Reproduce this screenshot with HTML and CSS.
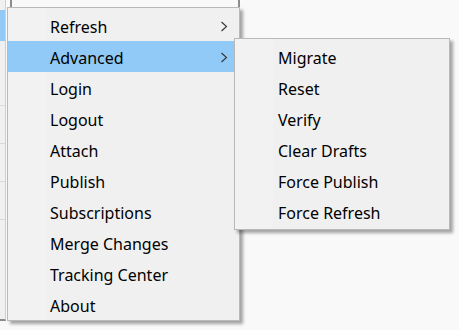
FILE: index.html
```html
<!DOCTYPE html>
<html lang="en">
<head>
    <meta charset="UTF-8">
    <title>Context menu</title>
    <link rel="stylesheet" href="styles.css">
</head>
<body>
    <!-- Window behind the menu -->
    <div class="desk">
        <div class="list">
            <div class="list-row selected"></div>
            <div class="list-row spacer"></div>
            <div class="list-row"></div>
            <div class="list-row"></div>
            <div class="list-row"></div>
        </div>
        <div class="header-line first"></div>
        <div class="header-line second"></div>
    </div>

    <!-- Main menu -->
    <div class="menu main-menu">
        <div class="item">Refresh<span class="arrow"><svg width="8" height="11" viewBox="0 0 8 11"><polyline points="1.5,1 6.5,5.5 1.5,10" fill="none" stroke="#333" stroke-width="1.1"/></svg></span></div>
        <div class="item active">Advanced<span class="arrow"><svg width="8" height="11" viewBox="0 0 8 11"><polyline points="1.5,1 6.5,5.5 1.5,10" fill="none" stroke="#333" stroke-width="1.1"/></svg></span></div>
        <div class="item">Login</div>
        <div class="item">Logout</div>
        <div class="item">Attach</div>
        <div class="item">Publish</div>
        <div class="item">Subscriptions</div>
        <div class="item">Merge Changes</div>
        <div class="item">Tracking Center</div>
        <div class="item">About</div>
    </div>

    <!-- Advanced submenu -->
    <div class="menu sub-menu">
        <div class="item">Migrate</div>
        <div class="item">Reset</div>
        <div class="item">Verify</div>
        <div class="item">Clear Drafts</div>
        <div class="item">Force Publish</div>
        <div class="item">Force Refresh</div>
    </div>
</body>
</html>
```

FILE: styles.css
```css
body {
    margin: 0;
    width: 459px;
    height: 330px;
    overflow: hidden;
    position: relative;
    background: #f9f9f9;
    font-family: 'Noto Sans', 'Open Sans', sans-serif;
}

.desk {
    display: flex;
    height: 100%;
}

.list {
    width: 6px;
    height: 321px;
    padding-top: 10px;
    box-sizing: border-box;
    background: #f0f0f0;
    border-right: 1px solid #cfcfcf;
    border-bottom: 2px solid #8a8a8a;
}

.list-row {
    height: 37px;
    border-bottom: 1px solid #d9d9d9;
}

.list-row.selected {
    height: 31px;
    border-bottom: none;
    background: #91c9f7;
}

.list-row.spacer {
    height: 64px;
}

.header-line {
    width: 2px;
    height: 8px;
    background: #8c8c8c;
}

.header-line.first {
    margin-left: 4px;
}

.header-line.second {
    margin-left: 226px;
}

.menu {
    position: absolute;
    background: linear-gradient(to right, #f2f2f2 0, #f2f2f2 38px, #f0f0f0 38px);
    border: 1px solid #b9b9b9;
    box-shadow: 3px 3px 3px rgba(0, 0, 0, 0.35);
    box-sizing: border-box;
}

.main-menu {
    left: 7px;
    top: 7px;
    width: 233px;
    height: 314px;
    padding-top: 2px;
}

.sub-menu {
    left: 234px;
    top: 38px;
    width: 216px;
    height: 192px;
    padding-top: 2px;
}

.item {
    height: 31px;
    box-sizing: border-box;
    padding-top: 2px;
    display: flex;
    align-items: center;
    padding-left: 42px;
    padding-right: 11px;
    font-size: 16px;
    color: #000;
}

.sub-menu .item {
    padding-left: 43px;
}

.item.active {
    background: #91c9f7;
}

.arrow {
    margin-left: auto;
    display: flex;
}
```
